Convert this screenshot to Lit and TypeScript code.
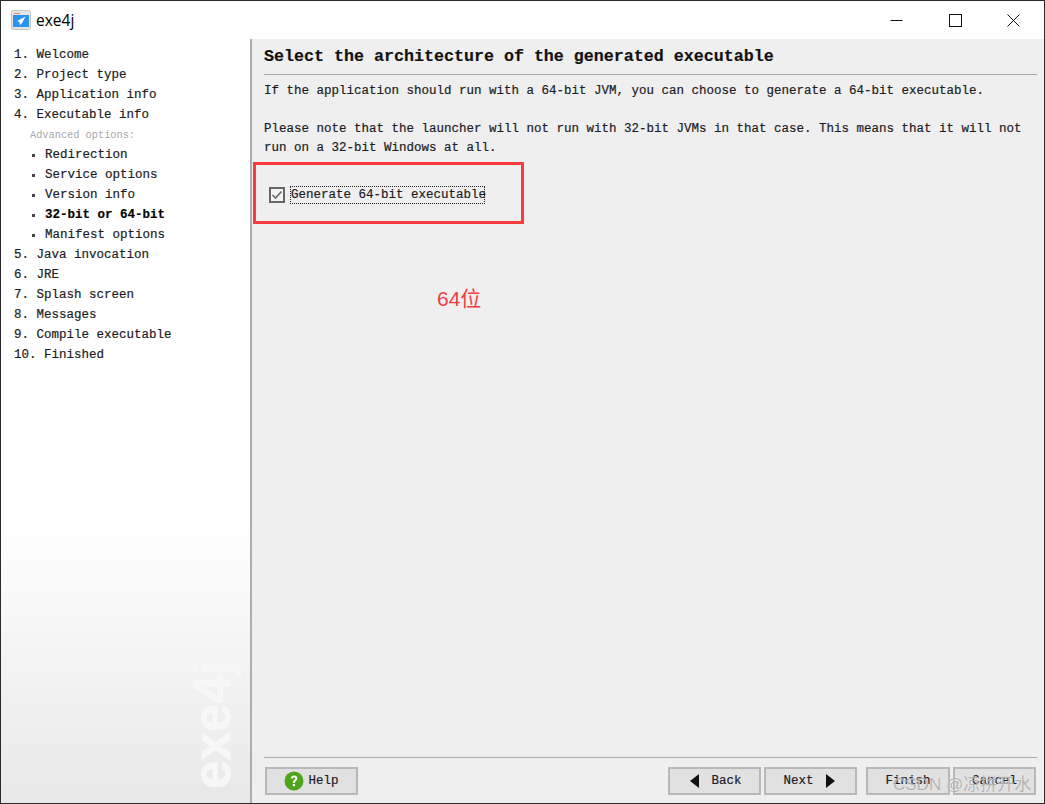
import { LitElement, css, html } from "lit";
import { customElement } from "lit/decorators.js";

const STEPS_TOP = ["1. Welcome", "2. Project type", "3. Application info", "4. Executable info"];
const ADVANCED = ["Redirection", "Service options", "Version info", "32-bit or 64-bit", "Manifest options"];
const STEPS_BOTTOM = ["5. Java invocation", "6. JRE", "7. Splash screen", "8. Messages", "9. Compile executable", "10. Finished"];

@customElement("app-root")
export class AppRoot extends LitElement {
  static styles = css`
    :host {
      display: block;
      position: relative;
      box-sizing: border-box;
      width: 1045px;
      height: 804px;
      border: 1px solid #2b2b2b;
      background: #fff;
      overflow: hidden;
      color: #1c1c24;
      font-family: "Liberation Mono", "DejaVu Sans Mono", monospace;
      font-size: 12.5px;
      -webkit-text-stroke: 0.2px #1c1c24;
    }
    .window {
      display: flex;
      flex-direction: column;
      height: 100%;
    }
    .titlebar {
      flex: none;
      display: flex;
      align-items: center;
      height: 38px;
      padding-left: 10px;
      font-family: "Open Sans", "Noto Sans", sans-serif;
      font-size: 15.5px;
      color: #000;
      -webkit-text-stroke: 0;
    }
    .app-icon {
      margin-right: 5px;
    }
    .controls {
      display: flex;
      margin-left: auto;
      margin-right: 1px;
    }
    .control {
      display: flex;
      align-items: center;
      justify-content: center;
      width: 58.5px;
      height: 38px;
    }
    .body {
      flex: 1;
      display: flex;
      min-height: 0;
    }
    .sidebar {
      position: relative;
      flex: none;
      box-sizing: border-box;
      width: 251px;
      padding: 6px 0 0 13px;
      border-right: 2px solid #adadad;
      background: linear-gradient(180deg, #fff 0, #fff 480px, #e8e8e8 100%);
      line-height: 20px;
    }
    .step,
    .sub,
    .advanced {
      height: 20px;
      white-space: pre;
    }
    .advanced {
      padding-left: 16px;
      font-size: 10.3px;
      color: #a8a8a8;
      -webkit-text-stroke: 0;
    }
    .sub {
      display: flex;
      align-items: center;
      padding-left: 18px;
    }
    .sub::before {
      content: "";
      width: 3px;
      height: 3px;
      margin-right: 10px;
      background: #444;
    }
    .sub.active {
      font-weight: 700;
      color: #000;
    }
    .brand {
      position: absolute;
      right: 14px;
      bottom: 14px;
      writing-mode: vertical-rl;
      transform: rotate(180deg);
      font-family: "Liberation Sans", Arial, sans-serif;
      font-size: 51px;
      font-weight: 700;
      line-height: 46px;
      color: #f7f7f7;
      -webkit-text-stroke: 0.6px #f7f7f7;
    }
    .main {
      flex: 1;
      display: flex;
      flex-direction: column;
      min-width: 0;
      padding: 0 7px 0 12px;
      background: #efefef;
    }
    h1 {
      flex: none;
      height: 35px;
      margin: 0;
      border-bottom: 1px solid #a8a8a8;
      font-size: 16.67px;
      font-weight: 700;
      line-height: 36px;
      color: #111;
    }
    .copy {
      margin: 7px 0 0;
      line-height: 19px;
      white-space: pre;
    }
    .option {
      display: flex;
      align-items: center;
      height: 18px;
      margin: 28px 0 0 5px;
    }
    .checkbox {
      margin-right: 5px;
    }
    .option-label {
      box-sizing: border-box;
      width: 195px;
      height: 18px;
      line-height: 16px;
      border: 1px dotted #222;
      white-space: pre;
    }
    .footer {
      display: flex;
      gap: 3px;
      margin-top: auto;
      padding: 9px 1px 8px 1px;
      border-top: 1px solid #adadad;
    }
    button {
      display: flex;
      align-items: center;
      justify-content: center;
      box-sizing: border-box;
      height: 28px;
      padding: 0;
      border: 2px solid #b8b8b8;
      background: #e1e1e1;
      color: #1c1c24;
      font: inherit;
    }
    .wide {
      width: 93px;
    }
    .finish {
      width: 84px;
    }
    .cancel {
      width: 83px;
    }
    .help {
      gap: 4px;
      margin-right: auto;
    }
    .back {
      gap: 12px;
      padding-left: 3px;
    }
    .next {
      gap: 12px;
      margin-right: 6px;
      padding-right: 3px;
    }
    .watermark {
      position: absolute;
      left: 892px;
      top: 773px;
      font-family: "Liberation Sans", "Noto Sans CJK SC", sans-serif;
      font-size: 17px;
      line-height: 22px;
      white-space: nowrap;
      color: rgba(165, 165, 165, 0.85);
      -webkit-text-stroke: 0;
      text-shadow: 0 0 1px rgba(255, 255, 255, 0.8);
    }
    .highlight {
      position: absolute;
      left: 252px;
      top: 161px;
      box-sizing: border-box;
      width: 271px;
      height: 62px;
      border: 3px solid #f73b3f;
    }
    .note {
      position: absolute;
      left: 436px;
      top: 285px;
      font-family: "Liberation Sans", "Noto Sans CJK SC", sans-serif;
      font-size: 21px;
      line-height: 26px;
      color: #f73b3f;
      -webkit-text-stroke: 0;
    }
  `;

  render() {
    return html`
      <div class="window">
        <div class="titlebar">
          <svg class="app-icon" width="20" height="20" viewBox="0 0 20 20">
            <rect x="0.5" y="0.5" width="19" height="19" rx="2" fill="#e4e4e4" stroke="#c4c4c4" />
            <rect x="2" y="5" width="16" height="12" fill="#2a93ee" />
            <rect x="3" y="3" width="6" height="1" fill="#e88a60" />
            <path d="M14.5 6.5 L6 11 L8.5 12 L9 15 L11 13 Z" fill="#fff" />
          </svg>
          <span>exe4j</span>
          <div class="controls">
            <div class="control">
              <svg width="13" height="13" viewBox="0 0 13 13"><path d="M0.5 6.5H12.5" stroke="#111" /></svg>
            </div>
            <div class="control">
              <svg width="13" height="13" viewBox="0 0 13 13"><rect x="0.5" y="0.5" width="12" height="12" fill="none" stroke="#111" /></svg>
            </div>
            <div class="control">
              <svg width="13" height="13" viewBox="0 0 13 13"><path d="M0.5 0.5L12.5 12.5M12.5 0.5L0.5 12.5" stroke="#111" /></svg>
            </div>
          </div>
        </div>
        <div class="body">
          <aside class="sidebar">
            ${STEPS_TOP.map((s) => html`<div class="step">${s}</div>`)}
            <div class="advanced">Advanced options:</div>
            ${ADVANCED.map((s) => html`<div class="sub ${s.startsWith("32") ? "active" : ""}">${s}</div>`)}
            ${STEPS_BOTTOM.map((s) => html`<div class="step">${s}</div>`)}
            <div class="brand">exe4j</div>
          </aside>
          <main class="main">
            <h1>Select the architecture of the generated executable</h1>
            <p class="copy">If the application should run with a 64-bit JVM, you can choose to generate a 64-bit executable.

Please note that the launcher will not run with 32-bit JVMs in that case. This means that it will not
run on a 32-bit Windows at all.</p>
            <div class="option">
              <svg class="checkbox" width="16" height="16" viewBox="0 0 16 16">
                <rect x="1" y="1" width="14" height="14" fill="#f4f4f4" stroke="#666" stroke-width="2" />
                <path d="M3.5 8L6.5 11L12.5 4.5" fill="none" stroke="#666" stroke-width="1.6" />
              </svg>
              <div class="option-label">Generate 64-bit executable</div>
            </div>
            <div class="footer">
              <button class="wide help">
                <svg width="20" height="20" viewBox="0 0 20 20">
                  <circle cx="10" cy="10" r="9.5" fill="#4ea51c" />
                  <path d="M6.8 7.6C6.9 5.6 8.3 4.6 10.1 4.6C12 4.6 13.4 5.7 13.4 7.4C13.4 9.6 10.9 9.7 10.9 11.9H8.9C8.9 9 11.2 8.9 11.2 7.5C11.2 6.8 10.7 6.4 10 6.4C9.3 6.4 8.9 6.9 8.8 7.6Z" fill="#fff" />
                  <rect x="8.8" y="13" width="2.2" height="2.2" fill="#fff" />
                </svg>
                Help
              </button>
              <button class="wide back">
                <svg width="9" height="14" viewBox="0 0 9 14"><path d="M9 0V14L0 7Z" fill="#111" /></svg>
                Back
              </button>
              <button class="wide next">
                Next
                <svg width="9" height="14" viewBox="0 0 9 14"><path d="M0 0V14L9 7Z" fill="#111" /></svg>
              </button>
              <button class="finish">Finish</button>
              <button class="cancel">Cancel</button>
            </div>
          </main>
        </div>
      </div>
      <div class="highlight"></div>
      <div class="note">64位</div>
      <div class="watermark">CSDN @凉拼开水</div>
    `;
  }
}
